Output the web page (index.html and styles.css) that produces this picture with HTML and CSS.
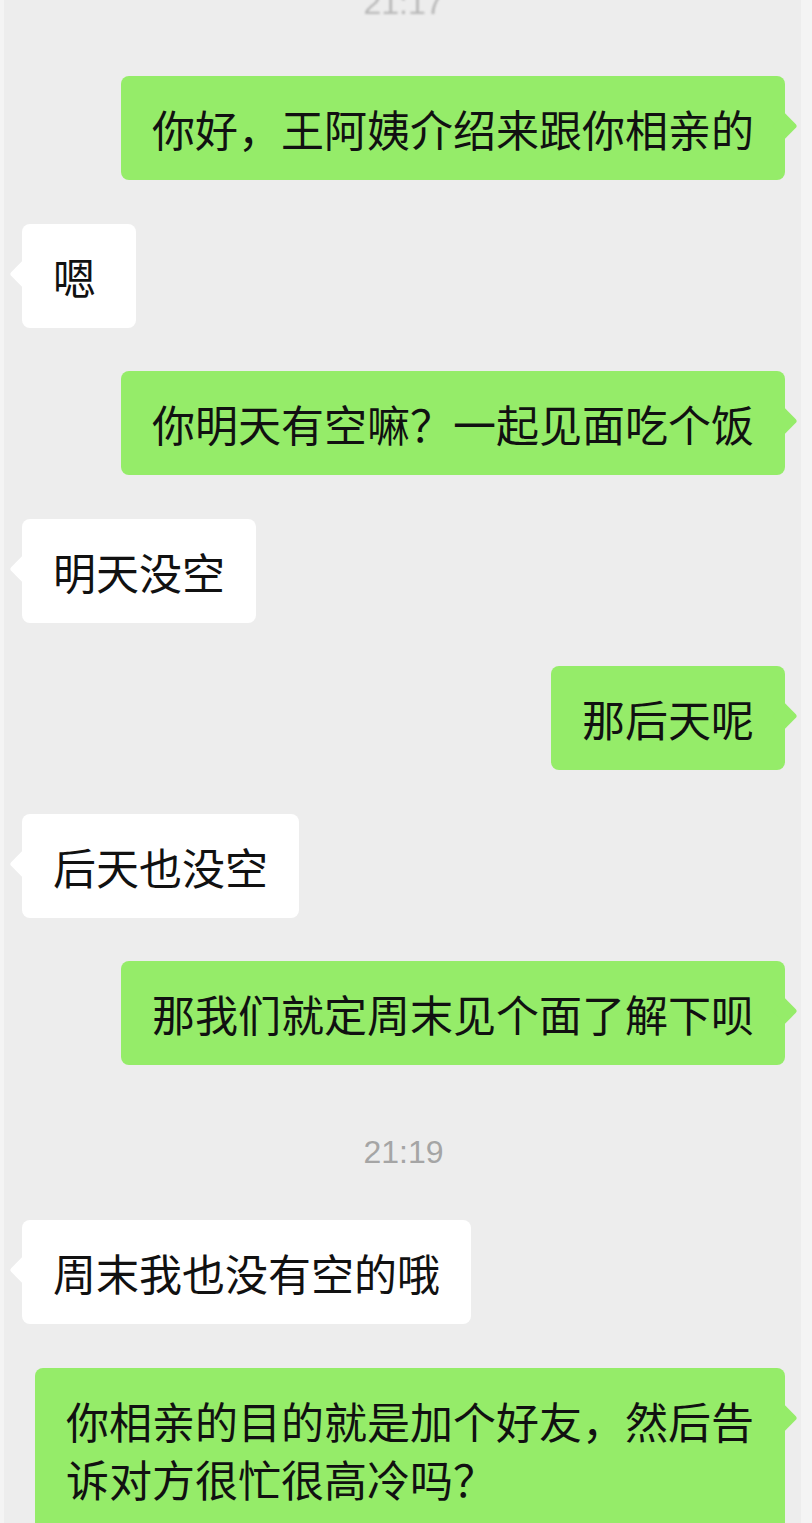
FILE: index.html
```html
<!DOCTYPE html>
<html lang="zh-CN">
<head>
    <meta charset="UTF-8">
    <meta name="viewport" content="width=device-width, initial-scale=1.0">
    <title>聊天</title>
    <link rel="stylesheet" href="styles.css">
</head>
<body>

<div class="chat">
    <div class="time time-top">21:17</div>

    <div class="row me"><div class="bubble">你好，王阿姨介绍来跟你相亲的</div></div>
    <div class="row other"><div class="bubble">嗯</div></div>
    <div class="row me"><div class="bubble">你明天有空嘛？一起见面吃个饭</div></div>
    <div class="row other"><div class="bubble">明天没空</div></div>
    <div class="row me"><div class="bubble">那后天呢</div></div>
    <div class="row other"><div class="bubble">后天也没空</div></div>
    <div class="row me"><div class="bubble">那我们就定周末见个面了解下呗</div></div>

    <div class="time">21:19</div>

    <div class="row other"><div class="bubble">周末我也没有空的哦</div></div>
    <div class="row me"><div class="bubble">你相亲的目的就是加个好友，然后告诉对方很忙很高冷吗？</div></div>
</div>

</body>
</html>
```

FILE: styles.css
```css
body {
    margin: 0;
    background-color: #f4f4f4;
    font-family: "Noto Sans CJK SC", "Noto Sans", sans-serif;
    height: 1523px;
    overflow: hidden;
}
.chat {
    margin: -35.5px 11px 0 4px;
    padding: 0 16px 0 18px;
    background-color: #ededed;
    min-height: 1600px;
    display: flex;
    flex-direction: column;
    gap: 43.5px;
}
.time {
    font-family: "Liberation Sans", Arial, sans-serif;
    font-size: 32px;
    line-height: 40px;
    color: #a5a5a5;
    text-align: center;
    padding: 23px 0 5px;
}
.time-top {
    padding: 18px 0 10px;
    color: #b8b8b8;
    filter: blur(1px);
}
.row {
    display: flex;
}
.row.me {
    justify-content: flex-end;
}
.row.other {
    justify-content: flex-start;
}
.bubble {
    position: relative;
    box-sizing: border-box;
    min-width: 114px;
    max-width: 750px;
    padding: 23px 31px;
    font-size: 43px;
    line-height: 58px;
    color: #111111;
    border-radius: 8px;
}
.me .bubble {
    background-color: #95ec69;
}
.other .bubble {
    background-color: #ffffff;
}
.bubble::before {
    content: "";
    position: absolute;
    top: 41px;
    width: 18px;
    height: 18px;
    background-color: inherit;
    transform: rotate(45deg);
}
.me .bubble::before {
    right: -9px;
    border-top-right-radius: 3px;
}
.other .bubble::before {
    left: -9px;
    border-bottom-left-radius: 3px;
}
```
